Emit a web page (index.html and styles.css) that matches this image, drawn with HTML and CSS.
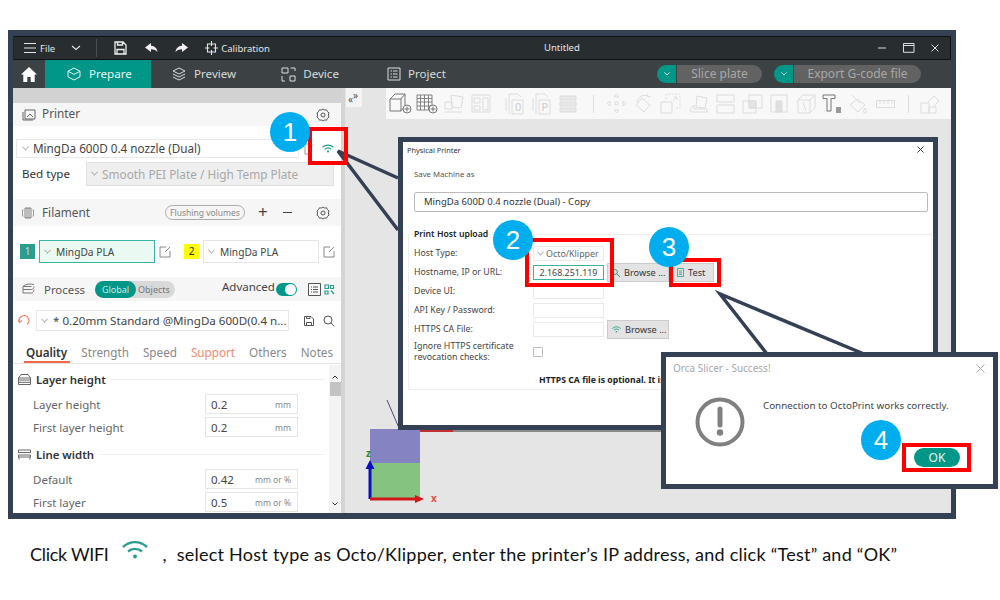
FILE: index.html
```html
<!DOCTYPE html>
<html lang="en">
<head>
    <meta charset="UTF-8">
    <title>Orca Slicer - Physical Printer setup</title>
    <link rel="stylesheet" href="styles.css">
</head>
<body>
<div class="page">
    <div class="shot">
        <div class="titlebar">
            <svg class="tb-ico menu" width="14" height="12" viewBox="0 0 14 12"><path d="M1 1.500h12M1 6h12M1 10.500h12" stroke="#e4e6e6" stroke-width="1.200"/></svg>
            <span class="tb-file">File</span>
            <svg class="tb-caret" width="10" height="6" viewBox="0 0 10 6"><path d="M1 1l4 3.500L9 1" fill="none" stroke="#e4e6e6" stroke-width="1.100"/></svg>
            <span class="tb-sep"></span>
            <svg class="tb-save" width="13" height="14" viewBox="0 0 13 14"><path d="M1 1h8l3 3v9H1zM3.500 1v3h5V1M3 13V8.500h7V13" fill="none" stroke="#f0f0f0" stroke-width="1.300"/></svg>
            <svg class="tb-undo" width="13" height="10" viewBox="0 0 13 10"><path d="M6 0L0 4.500 6 9V6.200c3 0 5 .8 6.500 3C12 5.500 10 3 6 2.800z" fill="#f0f0f0"/></svg>
            <svg class="tb-redo" width="13" height="10" viewBox="0 0 13 10"><path d="M7 0l6 4.500L7 9V6.200c-3 0-5 .8-6.500 3C1 5.500 3 3 7 2.800z" fill="#f0f0f0"/></svg>
            <svg class="tb-calib" width="13" height="14" viewBox="0 0 13 14"><path d="M2.500 3h8v8h-8zM6.500 0v5M6.500 9v5M0 7h4.500M8.500 7H13" fill="none" stroke="#e4e6e6" stroke-width="1.100"/></svg>
            <span class="tb-calib-text">Calibration</span>
            <span class="tb-title">Untitled</span>
            <span class="win-btns">
                <svg width="9" height="2" viewBox="0 0 9 2"><path d="M0 1h8" stroke="#ddd" stroke-width="1"/></svg>
                <svg width="12" height="10" viewBox="0 0 12 10"><path d="M.5.500h10.500v8.800H.5zM.5 2.500h10.500" fill="none" stroke="#ddd"/></svg>
                <svg width="8" height="8" viewBox="0 0 8 8"><path d="M.5.500l7 7M7.500.500l-7 7" stroke="#ddd"/></svg>
            </span>
        </div>

        <div class="tabbar">
            <svg class="home" width="16" height="15" viewBox="0 0 16 15"><path d="M8 0L0 7.500h2.300V15h4v-5h3.400v5h4V7.500H16z" fill="#fff"/></svg>
            <div class="tab active">
                <svg width="14" height="14" viewBox="0 0 14 14"><path d="M7 1l6 3.200v5.600L7 13 1 9.800V4.200zM1 4.200L7 7.400l6-3.200" fill="none" stroke="#e6f5f2"/></svg>
                <span>Prepare</span>
            </div>
            <div class="tab preview">
                <svg width="14" height="14" viewBox="0 0 14 14"><path d="M7 1l6 3-6 3-6-3zM1 7l6 3 6-3M1 10l6 3 6-3" fill="none" stroke="#d8dcdc"/></svg>
                <span>Preview</span>
            </div>
            <div class="tab device">
                <svg width="15" height="15" viewBox="0 0 15 15"><path d="M1 1h6v5H1zM9.500 1H14v3M1 9v5h3M9 9h5v5H9z" fill="none" stroke="#d8dcdc"/></svg>
                <span>Device</span>
            </div>
            <div class="tab project">
                <svg width="14" height="14" viewBox="0 0 14 14"><path d="M1 1h12v12H1zM3.500 4h1.500M6 4h4.500M3.500 7h1.500M6 7h4.500M3.500 10h1.500M6 10h4.500" fill="none" stroke="#d8dcdc"/></svg>
                <span>Project</span>
            </div>
            <div class="actions">
                <div class="split slice"><i><svg width="6" height="4" viewBox="0 0 6 4"><path d="M.5.500L3 3 5.500.500" fill="none" stroke="#fff"/></svg></i><b>Slice plate</b></div>
                <div class="split export"><i><svg width="6" height="4" viewBox="0 0 6 4"><path d="M.5.500L3 3 5.500.500" fill="none" stroke="#fff"/></svg></i><b>Export G-code file</b></div>
            </div>
        </div>

        <div class="workspace">
            <aside class="sidebar">
                <div class="band"></div>
                <div class="head printer-head">
                    <svg class="head-ico" width="14" height="12" viewBox="0 0 14 12"><path d="M3 1h10v9H3zM1 3v8h10M5 8l3-3 3 3" fill="none" stroke="#666"/></svg>
                    <span class="head-text">Printer</span>
                    <svg class="gear" width="14" height="14" viewBox="0 0 14 14"><path d="M7 1l1.500 1 2-.2 1 1.800 1.500 1.300L12.400 7l.6 2.100-1.500 1.300-1 1.800-2-.2L7 13l-1.500-1-2 .2-1-1.800L1 9.100 1.600 7 1 4.900l1.500-1.300 1-1.800 2 .2z" fill="none" stroke="#555"/><circle cx="7" cy="7" r="2" fill="none" stroke="#555"/></svg>
                </div>
                <div class="printer-row">
                    <div class="combo printer-combo"><em class="chev"></em>MingDa 600D 0.4 nozzle (Dual)</div>
                    <svg class="printer-edit" width="10" height="12" viewBox="0 0 10 12"><path d="M8 3V1H1v10h7" fill="none" stroke="#999"/></svg>
                    <svg class="printer-wifi" width="12" height="9" viewBox="0 0 24 18"><path d="M1 6.500c6.500-6 15.500-6 22 0M5.500 10.500c4-3.500 9-3.500 13 0" fill="none" stroke="#1fa58f" stroke-width="2.500"/><circle cx="12" cy="15" r="2.200" fill="#1fa58f"/></svg>
                </div>
                <div class="bed-row">
                    <span class="bed-label">Bed type</span>
                    <div class="combo bed-combo"><em class="chev"></em>Smooth PEI Plate / High Temp Plate</div>
                </div>
                <div class="head filament-head">
                    <svg class="head-ico" width="12" height="12" viewBox="0 0 12 12"><path d="M1 2.500c-1 2-1 5 0 7M11 2.500c1 2 1 5 0 7M3 1h6v10H3zM5 1v10M7 1v10" fill="none" stroke="#777" stroke-width=".9"/></svg>
                    <span class="head-text">Filament</span>
                    <span class="flush">Flushing volumes</span>
                    <span class="plus">+</span>
                    <span class="minus"></span>
                    <svg class="gear" width="14" height="14" viewBox="0 0 14 14"><path d="M7 1l1.500 1 2-.2 1 1.800 1.500 1.300L12.400 7l.6 2.100-1.500 1.300-1 1.800-2-.2L7 13l-1.500-1-2 .2-1-1.800L1 9.100 1.600 7 1 4.900l1.500-1.300 1-1.800 2 .2z" fill="none" stroke="#555"/><circle cx="7" cy="7" r="2" fill="none" stroke="#555"/></svg>
                </div>
                <div class="filament-row">
                    <span class="badge green">1</span>
                    <div class="combo fil-combo selected"><em class="chev"></em>MingDa PLA</div>
                    <svg class="edit" width="12" height="12" viewBox="0 0 12 12"><path d="M7 1H1v10h10V5M6 6l5-5" fill="none" stroke="#888"/></svg>
                    <span class="badge yellow">2</span>
                    <div class="combo fil-combo"><em class="chev"></em>MingDa PLA</div>
                    <svg class="edit" width="12" height="12" viewBox="0 0 12 12"><path d="M7 1H1v10h10V5M6 6l5-5" fill="none" stroke="#888"/></svg>
                </div>
                <div class="head process-head">
                    <svg class="head-ico" width="13" height="12" viewBox="0 0 13 12"><path d="M1 3.500C4 .5 9 1 12 1.500M1 3.500h8.500M1 3.500v3h8.500c1.500 0 2.500-2 2.500-3M1 6.500V10h8.500c1.500 0 2.500-2 2.500-3.500" fill="none" stroke="#777"/></svg>
                    <span class="head-text">Process</span>
                    <div class="toggle"><span class="on">Global</span><span class="off">Objects</span></div>
                    <span class="advanced">Advanced</span>
                    <span class="switch"><i></i></span>
                    <svg class="list-ico" width="13" height="13" viewBox="0 0 13 13"><path d="M.5.500h12v12H.5zM3 4h1M5 4h5M3 6.500h1M5 6.500h5M3 9h1M5 9h5" fill="none" stroke="#555"/></svg>
                    <svg class="nodes-ico" width="11" height="11" viewBox="0 0 11 11"><path d="M1 1h3.500v3.500H1zM6.500 1.500h3v3h-3zM1 7h3v3H1zM7 6.500l3 3.500" fill="none" stroke="#2a9d8c" stroke-width="1.200"/></svg>
                </div>
                <div class="preset-row">
                    <svg class="refresh" width="12" height="11" viewBox="0 0 12 11"><path d="M1.500 7A4.800 4.800 0 1 1 9 9.300" fill="none" stroke="#f47e62" stroke-width="1.100"/><path d="M0 4.500l1.500 3L4 5.500" fill="none" stroke="#f47e62" stroke-width="1.100"/></svg>
                    <div class="combo preset-combo"><em class="chev"></em>* 0.20mm Standard @MingDa 600D(0.4 n...</div>
                    <svg class="preset-save" width="10" height="10" viewBox="0 0 10 10"><path d="M.5.500h6.500l2.500 2.500v6.500h-9zM2.500 9.500V6.500h5v3M2.500.5v2h3.500v-2" fill="none" stroke="#555"/></svg>
                    <svg class="preset-search" width="12" height="12" viewBox="0 0 12 12"><circle cx="5" cy="5" r="4" fill="none" stroke="#555"/><path d="M8 8l3.500 3.500" stroke="#555"/></svg>
                </div>
                <div class="tabs">
                    <span class="cur">Quality</span>
                    <span>Strength</span>
                    <span>Speed</span>
                    <span class="warn">Support</span>
                    <span>Others</span>
                    <span>Notes</span>
                </div>
                <div class="params">
                    <div class="list">
                        <div class="sect first-sect">
                            <svg width="13" height="11" viewBox="0 0 13 11"><path d="M3 .5h7l2.500 3.500v6.500H.5V4zM.5 4h12M.5 6h12M.5 8.300h12" fill="none" stroke="#666"/></svg>
                            <b>Layer height</b><hr>
                        </div>
                        <div class="param"><label>Layer height</label><div class="field"><span>0.2</span><small>mm</small></div></div>
                        <div class="param"><label>First layer height</label><div class="field"><span>0.2</span><small>mm</small></div></div>
                        <div class="sect">
                            <svg width="13" height="11" viewBox="0 0 13 11"><path d="M.5 1h12v2.500H.5zM.5 6h12v2H.5zM1 8v2.500M12 8v2.500" fill="none" stroke="#666"/></svg>
                            <b>Line width</b><hr>
                        </div>
                        <div class="param"><label>Default</label><div class="field"><span>0.42</span><small>mm or %</small></div></div>
                        <div class="param"><label>First layer</label><div class="field"><span>0.5</span><small>mm or %</small></div></div>
                    </div>
                    <div class="scroll">
                        <svg width="6" height="4" viewBox="0 0 6 4"><path d="M.5 3.500L3 1l2.500 2.500" fill="none" stroke="#333"/></svg>
                        <i></i>
                        <svg class="down" width="6" height="4" viewBox="0 0 6 4"><path d="M.5.500L3 3 5.500.500" fill="none" stroke="#333"/></svg>
                    </div>
                </div>
            </aside>

            <main class="viewport">
                <div class="collapse">
                    <span>«</span><span class="up">»</span>
                </div>
                <div class="toolbar">
                    <svg width="23" height="21" viewBox="0 0 23 21"><path d="M1 6l5-5h10v12l-4 5H1zM1 6h11v12M12 6l4-5" fill="none" stroke="#777"/><circle cx="18" cy="16" r="4" fill="#f8f8f8" stroke="#777"/><path d="M18 13.500v5M15.500 16h5" stroke="#777"/></svg>
                    <svg class="g1" width="22" height="20" viewBox="0 0 22 20"><path d="M1 1h15v15H1zM1 4.500h15M1 8h15M1 12h15M4.500 1v15M8.500 1v15M12.500 1v15" fill="none" stroke="#777" stroke-width=".9"/><circle cx="17" cy="15" r="4" fill="#f8f8f8" stroke="#777"/><path d="M17 12.500v5M14.500 15h5" stroke="#777"/></svg>
                    <svg class="g2 dim" width="22" height="20" viewBox="0 0 22 20"><path d="M8 1l12 2-2 11-9-1zM2 8h7v7H2zM2 18h17" fill="none"/></svg>
                    <svg class="g3 dim" width="20" height="19" viewBox="0 0 20 19"><path d="M1 1h18v17H1zM3 4h6v5H3zM3 12h6v4H3zM12 4h5v12h-5z" fill="none"/></svg>
                    <svg class="g4 dim" width="22" height="22" viewBox="0 0 22 22"><path d="M5 21V1h9l3 3M2 18V5M8 7h11v14H8z" fill="none"/><text x="11" y="18" class="tool-letter">0</text></svg>
                    <svg class="g5 dim" width="20" height="22" viewBox="0 0 20 22"><path d="M4 21V1h9l3 3M1 18V5M7 7h11v14H7z" fill="none"/><text x="9.500" y="18" class="tool-letter">P</text></svg>
                    <svg class="g6 dim" width="18" height="18" viewBox="0 0 18 18"><path d="M1 1h16v4H1zM1 7h16v4H1zM1 13h16v4H1z" fill="#e8e8e8"/></svg>
                    <span class="tool-sep s1"></span>
                    <svg class="g7 dim" width="21" height="21" viewBox="0 0 21 21"><path d="M10.500 1l2.500 3h-5zM10.500 20l2.500-3h-5zM1 10.500l3-2.500v5zM20 10.500l-3-2.500v5zM9 9h3v3H9z" fill="none"/></svg>
                    <svg class="g8 dim" width="21" height="21" viewBox="0 0 21 21"><path d="M9 5l8 7-6 7-8-7zM4 9C5 4 10 1 14 3M14 1l1 3 3-1" fill="none"/></svg>
                    <svg class="g9 dim" width="21" height="21" viewBox="0 0 21 21"><path d="M1 9h11v11H1z" fill="none"/><path d="M6 6V1h14v14h-5" fill="none" stroke-dasharray="2 1.500"/><path d="M13 8l4-4M14 4h3v3" fill="none"/></svg>
                    <svg class="g10 dim" width="19" height="20" viewBox="0 0 19 20"><path d="M8 2l10 2-2 10-9-1zM1 15l4-4v4h13v3H2z" fill="none"/></svg>
                    <svg class="g11 dim" width="19" height="20" viewBox="0 0 19 20"><path d="M1 1h17v7H1zM1 11h17v8H1z" fill="none"/></svg>
                    <svg class="g12 dim" width="21" height="20" viewBox="0 0 21 20"><path d="M1 7h13v12H1zM7 1h13v13H7z" fill="none"/><path d="M7 7h7v7H7z" fill="#e4e4e4"/></svg>
                    <svg class="g13 dim" width="18" height="19" viewBox="0 0 18 19"><path d="M1 1h16v17H1z" fill="none"/><path d="M6 7h6v11H6z" fill="#e0e0e0"/></svg>
                    <svg class="g14 dim" width="19" height="20" viewBox="0 0 19 20"><path d="M1 6l5-5h12v13l-5 5H1zM1 6h12v13M13 6l5-5M6 8l3 9" fill="none"/></svg>
                    <svg class="g15" width="20" height="20" viewBox="0 0 20 20"><path d="M1 1h12v3.500H9V17H5V4.500H1z" fill="none" stroke="#777"/><path d="M14 13h5v6h-5z" fill="#999"/></svg>
                    <svg class="g16 dim" width="20" height="20" viewBox="0 0 20 20"><path d="M8 5l8 6-7 7-8-7zM3 1l8 8M16 14c-2 3-2 5 0 5s2-2 0-5z" fill="none"/></svg>
                    <svg class="g17 dim" width="19" height="8" viewBox="0 0 19 8"><path d="M.5.500h18v7H.5zM4 1v3M8 1v3M12 1v3M16 1v3" fill="none"/></svg>
                    <span class="tool-sep s2"></span>
                    <svg class="g18 dim" width="20" height="20" viewBox="0 0 20 20"><path d="M1 9h8v10H1zM9 13h7v6H9zM8 8l6-6 5 5-6 6" fill="none"/></svg>
                </div>

                <div class="ruler"></div>
                <div class="plate-top"></div>
                <div class="plate-bottom"></div>
                <svg class="axes" width="72" height="62" viewBox="0 0 72 62">
                    <path d="M5 54V22" stroke="#0a0fc0" stroke-width="3"/>
                    <path d="M.5 24L5 15l4.500 9z" fill="#0a0fc0"/>
                    <path d="M5 54h47" stroke="#d01818" stroke-width="3"/>
                    <path d="M50 50l9 4-9 4z" fill="#d01818"/>
                    <text x="1" y="12" class="axis-z">z</text>
                    <text x="66" y="57" class="axis-x">x</text>
                </svg>
            </main>
        </div>
    </div>

    <p class="caption">
        <span class="click">Click WIFI</span>
        <svg width="26" height="20" viewBox="0 0 26 20"><path d="M1 7c7-6.500 17-6.500 24 0M6 11.500c4-3.500 10-3.500 14 0" fill="none" stroke="#2a9d8c" stroke-width="2.400"/><circle cx="13" cy="16.500" r="2" fill="#2a9d8c"/></svg>
        <span class="rest">,&nbsp; select Host type as Octo/Klipper, enter the printer’s IP address, and click “Test” and “OK”</span>
    </p>

    <svg class="callout" width="1000" height="600" viewBox="0 0 1000 600">
        <path d="M398 178L338 151 398 230" fill="none" stroke="#344154" stroke-width="3.500"/>
        <path d="M387 400L399 428" fill="none" stroke="#4a4a70" stroke-width="1"/>
    </svg>

    <section class="dialog printer-dialog">
        <div class="dlg-title"><span>Physical Printer</span><svg width="7" height="7" viewBox="0 0 7 7"><path d="M.5.500l6 6M6.500.500l-6 6" stroke="#333"/></svg></div>
        <p class="save-label">Save Machine as</p>
        <div class="name-input">MingDa 600D 0.4 nozzle (Dual) - Copy</div>
        <fieldset class="host-group">
            <legend>Print Host upload</legend>
            <div class="f-row"><label>Host Type:</label><div class="f-box host-type"><em class="chev"></em>Octo/Klipper</div></div>
            <div class="f-row">
                <label>Hostname, IP or URL:</label><div class="f-box focus">2.168.251.119</div>
                <span class="btn browse"><svg width="8" height="8" viewBox="0 0 8 8"><circle cx="3" cy="3" r="2.400" fill="none" stroke="#2a9d8c"/><path d="M5 5l3 3" stroke="#2a9d8c"/></svg>Browse ...</span>
                <span class="btn test"><svg width="7" height="9" viewBox="0 0 7 9"><path d="M.5.500h6v8h-6zM2 3h3M2 4.800h3M2 6.500h3" fill="none" stroke="#2a9d8c" stroke-width=".8"/></svg>Test</span>
            </div>
            <div class="f-row"><label>Device UI:</label><div class="f-box"></div></div>
            <div class="f-row"><label>API Key / Password:</label><div class="f-box"></div></div>
            <div class="f-row">
                <label>HTTPS CA File:</label><div class="f-box"></div>
                <span class="btn browse"><svg width="9" height="7" viewBox="0 0 24 18"><path d="M1 6.500c6.500-6 15.500-6 22 0M5.500 10.500c4-3.500 9-3.500 13 0" fill="none" stroke="#2a9d8c" stroke-width="2.500"/><circle cx="12" cy="15" r="2.200" fill="#2a9d8c"/></svg>Browse ...</span>
            </div>
            <div class="f-row ignore"><label>Ignore HTTPS certificate<br>revocation checks:</label><span class="check"></span></div>
            <p class="optional">HTTPS CA file is optional. It is</p>
        </fieldset>
    </section>

    <svg class="callout" width="1000" height="600" viewBox="0 0 1000 600">
        <path d="M767 354L720 294 864 354" fill="none" stroke="#344154" stroke-width="3.500"/>
    </svg>

    <section class="dialog success-dialog">
        <div class="ok-title"><span>Orca Slicer - Success!</span><svg width="9" height="9" viewBox="0 0 9 9"><path d="M.5.500l8 8M8.500.500l-8 8" stroke="#aaa"/></svg></div>
        <div class="ok-body">
            <svg width="50" height="50" viewBox="0 0 50 50"><circle cx="25" cy="25" r="22.500" fill="none" stroke="#808080" stroke-width="4"/><path d="M25 12v16" stroke="#808080" stroke-width="5" stroke-linecap="round"/><circle cx="25" cy="35.500" r="3.200" fill="#808080"/></svg>
            <div class="ok-msg">Connection to OctoPrint works correctly.</div>
        </div>
        <span class="ok-btn">OK</span>
    </section>

    <span class="mark m1"></span>
    <span class="mark m2"></span>
    <span class="mark m3"></span>
    <span class="mark m4"></span>
    <span class="step s-1">1</span>
    <span class="step s-2">2</span>
    <span class="step s-3">3</span>
    <span class="step s-4">4</span>
</div>
</body>
</html>
```

FILE: styles.css
```css
html, body {
    margin: 0;
    padding: 0;
    background: #fff;
    font-family: "Noto Sans", sans-serif;
    color: #333;
}

.page {
    position: relative;
    width: 1000px;
    height: 600px;
    overflow: hidden;
    padding-top: 30px;
    box-sizing: border-box;
}

.shot {
    margin-left: 8px;
    width: 948px;
    height: 489px;
    box-sizing: border-box;
    border: solid #344154;
    border-width: 6px 5px;
    display: flex;
    flex-direction: column;
    background: #e5e5e5;
}

/* Title bar */
.titlebar {
    height: 24px;
    flex: none;
    display: flex;
    align-items: center;
    background: #282d2f;
    border: 1px solid #111;
    border-left-color: #222;
    box-sizing: border-box;
    color: #e4e6e6;
    font-size: 9.500px;
    position: relative;
}

.menu { margin-left: 9px; }
.tb-file { margin-left: 3px; }
.tb-caret { margin-left: 16px; }
.tb-sep { width: 1px; height: 18px; background: #4a4f51; margin-left: 15px; }
.tb-save { margin-left: 17px; }
.tb-undo { margin-left: 18px; }
.tb-redo { margin-left: 17px; }
.tb-calib { margin-left: 17px; }
.tb-calib-text { margin-left: 3px; }

.tb-title {
    position: absolute;
    left: 530px;
    top: 4px;
}

.win-btns {
    margin-left: auto;
    display: flex;
    align-items: center;
    gap: 16px;
    margin-right: 11px;
}

/* Tab bar */
.tabbar {
    height: 28px;
    flex: none;
    display: flex;
    align-items: center;
    background: #3c4244;
    color: #d8dcdc;
    font-size: 11.600px;
}

.home { margin: 0 8px 0 8px; }

.tab {
    display: flex;
    align-items: center;
    gap: 8px;
    height: 100%;
}

.tab span { padding-bottom: 2px; }

.tab.active {
    background: #009688;
    color: #e6f5f2;
    width: 106px;
    box-sizing: border-box;
    padding-left: 22px;
}

.preview { margin-left: 21px; }
.device { margin-left: 45px; gap: 7px; }
.project { margin-left: 48px; gap: 7px; }

.actions {
    margin-left: auto;
    margin-right: 30px;
    display: flex;
    gap: 12px;
}

.split {
    display: flex;
    height: 18px;
    font-size: 12px;
}

.split i {
    width: 19px;
    background: #009688;
    border-radius: 9px 0 0 9px;
    display: flex;
    align-items: center;
    justify-content: center;
    margin-right: 1px;
}

.split b {
    font-weight: normal;
    background: #626262;
    color: #a8a8a8;
    border-radius: 0 9px 9px 0;
    text-align: center;
    line-height: 18px;
}

.slice b { width: 85px; }
.export b { width: 127px; }

/* Left panel */
.workspace {
    flex: 1;
    display: flex;
    min-height: 0;
}

.sidebar {
    width: 328px;
    flex: none;
    background: #fff;
    display: flex;
    flex-direction: column;
    border-right: 4px solid #d4d4d4;
    box-sizing: content-box;
    font-size: 11.800px;
}

.band {
    height: 15px;
    background: #d2d2d2;
    flex: none;
}

.head {
    display: flex;
    align-items: center;
    background: #f6f6f6;
    flex: none;
    position: relative;
}

.printer-head { height: 23px; }
.filament-head { height: 27px; margin-top: 13px; }
.process-head { height: 24px; margin-top: 14px; }

.head-ico { margin-left: 9px; }
.head-text { margin-left: 6px; color: #555; padding-bottom: 3px; }
.filament-head .head-text { margin-left: 8px; padding-bottom: 2px; }
.process-head .head-text { margin-left: 9px; padding: 0; font-size: 11.400px; }
.gear { margin-left: auto; margin-right: 11px; }

.printer-row {
    display: flex;
    align-items: center;
    height: 19px;
    margin-top: 13px;
    padding-left: 3px;
    flex: none;
}

.combo {
    display: flex;
    align-items: center;
    box-sizing: border-box;
    border: 1px solid #e8e8e8;
    background: #fff;
    white-space: nowrap;
    overflow: hidden;
}

.chev {
    width: 4px;
    height: 4px;
    border: solid #aaa;
    border-width: 0 1px 1px 0;
    transform: rotate(45deg) translate(-1px, -1px);
    margin: 0 5px 0 5px;
    flex: none;
}

.printer-combo { width: 283px; height: 19px; font-size: 11.700px; padding: 0 0 1px 1px; color: #444; }
.printer-edit { margin-left: 5px; }
.printer-wifi { margin-left: 8px; }

.bed-row {
    display: flex;
    align-items: center;
    height: 24px;
    margin-top: 4px;
    flex: none;
}

.bed-label { margin-left: 9px; width: 64px; color: #333; font-size: 11.600px; padding-bottom: 1px; }

.bed-combo {
    width: 248px;
    height: 24px;
    background: #efefef;
    border-color: #e0e0e0;
    color: #a8a8a8;
    font-size: 11.800px;
    padding-bottom: 1px;
}

.flush {
    position: absolute;
    left: 152px;
    top: 6px;
    width: 80px;
    height: 15px;
    box-sizing: border-box;
    border: 1px solid #aaa;
    border-radius: 8px;
    font-size: 8.500px;
    line-height: 13px;
    text-align: center;
    color: #888;
}

.plus {
    position: absolute;
    left: 245px;
    top: 2px;
    font-size: 17px;
    line-height: 22px;
    color: #444;
}

.minus {
    position: absolute;
    left: 270px;
    top: 13px;
    width: 9px;
    height: 1px;
    background: #444;
}

.filament-row {
    display: flex;
    align-items: center;
    height: 23px;
    margin-top: 14px;
    flex: none;
    font-size: 10.200px;
}

.badge {
    width: 15px;
    height: 15px;
    line-height: 15px;
    text-align: center;
    font-size: 10px;
    flex: none;
}

.badge.green { background: #2a9d8c; color: #cde; margin-left: 7px; }
.badge.yellow { background: #ff0; color: #222; margin-left: 13px; }

.fil-combo {
    width: 116px;
    height: 23px;
    margin-left: 4px;
    color: #444;
    border-color: #e4e4e4;
}

.fil-combo .chev { margin-right: 6px; }
.fil-combo.selected { background: #eafaf3; border-color: #3bb3a2; }
.edit { margin-left: 4px; flex: none; }

.toggle {
    position: absolute;
    left: 82px;
    top: 4px;
    width: 80px;
    height: 17px;
    border-radius: 9px;
    background: #d9d9d9;
    display: flex;
    align-items: center;
    font-size: 9px;
}

.toggle .on {
    background: #009688;
    color: #cfe9e4;
    width: 41px;
    height: 17px;
    line-height: 17px;
    text-align: center;
    border-radius: 9px;
}

.toggle .off { color: #777; margin-left: 2px; }

.advanced {
    position: absolute;
    left: 209px;
    top: 2px;
    color: #444;
    font-size: 11.500px;
}

.switch {
    position: absolute;
    left: 263px;
    top: 6px;
    width: 21px;
    height: 13px;
    border-radius: 7px;
    background: #009688;
}

.switch i {
    position: absolute;
    right: 1px;
    top: 1px;
    width: 11px;
    height: 11px;
    background: #fff;
    border-radius: 50%;
}

.list-ico { position: absolute; left: 295px; top: 6px; }
.nodes-ico { position: absolute; left: 311px; top: 7px; }

.preset-row {
    display: flex;
    align-items: center;
    height: 21px;
    margin-top: 9px;
    flex: none;
}

.refresh { margin-left: 5px; }

.preset-combo {
    width: 253px;
    height: 21px;
    margin-left: 6px;
    font-size: 11.600px;
    color: #444;
}

.preset-combo .chev { margin-right: 6px; }
.preset-save { margin-left: 15px; }
.preset-search { margin-left: 9px; }

.tabs {
    display: flex;
    height: 24px;
    margin-top: 9px;
    flex: none;
    box-sizing: border-box;
    border-bottom: 1px solid #e6e6e6;
    font-size: 11.700px;
    color: #888;
    padding: 2px 0 0 13px;
    gap: 14px;
    line-height: 20px;
}

.tabs span { position: relative; }
.tabs .cur { color: #333; font-weight: 600; }
.tabs .warn { color: #f58a6e; }

.tabs .cur::after {
    content: "";
    position: absolute;
    left: -2px;
    right: -3px;
    bottom: 0;
    height: 2px;
    background: #f0684a;
}

.params {
    flex: 1;
    display: flex;
    min-height: 0;
}

.list {
    flex: 1;
    min-width: 0;
    padding: 0 0 0 5px;
}

.sect {
    display: flex;
    align-items: center;
    height: 18px;
    margin-top: 8px;
    font-size: 11.400px;
    color: #333;
}

.first-sect { margin-top: 6px; }
.sect b { margin-left: 5px; font-weight: 600; }

.sect hr {
    flex: 1;
    height: 1px;
    margin: 0 4px 0 5px;
    border: 0;
    background: #eee;
}

.param {
    display: flex;
    align-items: center;
    height: 20px;
    margin-top: 3px;
    color: #666;
    font-size: 11.500px;
}

.sect + .param { margin-top: 6px; }
.param label { width: 187px; padding-left: 15px; box-sizing: border-box; }

.field {
    width: 93px;
    height: 20px;
    box-sizing: border-box;
    border: 1px solid #e4e4e4;
    display: flex;
    align-items: center;
    justify-content: space-between;
    padding: 0 6px 0 5px;
    color: #444;
    font-size: 11.500px;
}

.field small { font-size: 8.500px; color: #888; }

.scroll {
    width: 12px;
    flex: none;
    margin-top: 1px;
    display: flex;
    flex-direction: column;
    align-items: center;
    background: #f4f4f4;
    padding: 10px 0 7px;
    box-sizing: border-box;
}

.scroll i {
    width: 11px;
    height: 14px;
    background: #c4c4c4;
    margin-top: 3px;
}

.scroll .down { margin-top: auto; }

/* Scene */
.viewport {
    flex: 1;
    position: relative;
    background: #e5e5e5;
    min-width: 0;
}

.collapse {
    position: absolute;
    left: 1px;
    top: 0;
    width: 16px;
    height: 19px;
    background: #f4f4f4;
    font-size: 10px;
    line-height: 10px;
    color: #555;
}

.collapse span { position: absolute; left: 2px; top: 6px; }
.collapse .up { left: 7px; top: 2px; }

.toolbar {
    position: absolute;
    left: 41px;
    right: 0;
    top: 0;
    height: 31px;
    background: #f8f8f8;
    display: flex;
    align-items: center;
    padding-left: 3px;
}

.dim { stroke: #dcdcdc; }
.tool-letter { font-size: 11px; fill: #ccc; stroke: none; font-family: "Noto Sans", sans-serif; }

.g1 { margin-left: 4px; }
.g2 { margin-left: 5px; }
.g3 { margin-left: 6px; }
.g4 { margin-left: 13px; }
.g5 { margin-left: 6px; }
.g6 { margin-left: 7px; }
.tool-sep { width: 1px; height: 18px; background: #ddd; }
.s1 { margin-left: 16px; }
.g7 { margin-left: 12px; }
.g8 { margin-left: 6px; }
.g9 { margin-left: 6px; }
.g10 { margin-left: 8px; }
.g11 { margin-left: 8px; }
.g12 { margin-left: 7px; }
.g13 { margin-left: 7px; }
.g14 { margin-left: 9px; }
.g15 { margin-left: 6px; }
.g16 { margin-left: 7px; }
.g17 { margin-left: 7px; }
.s2 { margin-left: 13px; }
.g18 { margin-left: 11px; }

.ruler {
    position: absolute;
    left: 75px;
    top: 342px;
    width: 245px;
    height: 2px;
    background: linear-gradient(90deg, #c03030 33px, #8a8a8a 33px);
}

.plate-top {
    position: absolute;
    left: 25px;
    top: 341px;
    width: 50px;
    height: 34px;
    background: #8583c2;
}

.plate-bottom {
    position: absolute;
    left: 25px;
    top: 375px;
    width: 50px;
    height: 35px;
    background: #85c480;
}

.axes {
    position: absolute;
    left: 20px;
    top: 357px;
}

.axis-z { font-size: 10px; font-weight: bold; fill: #2a8a3a; font-family: "Noto Sans", sans-serif; }
.axis-x { font-size: 10px; font-weight: bold; fill: #d85050; font-family: "Noto Sans", sans-serif; }

/* Caption */
.caption {
    margin: 23px 0 0 30px;
    display: flex;
    align-items: center;
    height: 24px;
    font-family: "Lato", sans-serif;
    font-size: 18px;
    color: #111;
    white-space: nowrap;
}

.caption svg {
    margin: -9px 0 0 13px;
    flex: none;
}

.click { letter-spacing: -.3px; }
.rest { margin-left: 15px; letter-spacing: .25px; }

/* Overlays */
.callout {
    position: absolute;
    left: 0;
    top: 0;
}

.dialog {
    position: absolute;
    box-sizing: border-box;
    border: 5px solid #344154;
    background: #fff;
}

.printer-dialog {
    left: 398px;
    top: 137px;
    width: 540px;
    height: 293px;
    padding: 0 5px;
    font-size: 9.500px;
    color: #444;
}

.dlg-title {
    display: flex;
    justify-content: space-between;
    align-items: center;
    height: 15px;
    font-size: 7.400px;
    color: #333;
    padding-right: 4px;
    margin-left: -1px;
}

.save-label {
    margin: 10px 0 0 6px;
    font-size: 7.800px;
    line-height: 15px;
    color: #555;
}

.name-input {
    margin: 10px 0 0 6px;
    width: 514px;
    height: 20px;
    box-sizing: border-box;
    border: 1px solid #bbb;
    border-radius: 2px;
    padding-left: 9px;
    line-height: 18px;
    font-size: 9.500px;
    color: #333;
}

.host-group {
    margin: 16px 0 0 0;
    padding: 0 0 0 5px;
    border: 1px solid #eee;
    height: 162px;
    box-sizing: border-box;
    width: 524px;
    min-width: 0;
}

.host-group legend {
    font-size: 8.700px;
    font-weight: 600;
    color: #222;
    padding: 0;
    line-height: 13px;
}

.f-row {
    display: flex;
    align-items: center;
    height: 15px;
    margin-top: 4px;
}

.f-row:nth-of-type(1) { margin-top: 5px; }
.f-row label { width: 119px; flex: none; color: #444; font-size: 8.800px; line-height: 11px; }

.f-box {
    width: 71px;
    height: 15px;
    flex: none;
    box-sizing: border-box;
    border: 1px solid #eaeaea;
    display: flex;
    align-items: center;
    justify-content: center;
    font-size: 8.900px;
    white-space: nowrap;
}

.f-box.focus { border-color: #3bb3a2; }
.host-type { color: #666; justify-content: flex-start; }
.host-type .chev { margin: 0 3px 0 4px; }

.btn {
    display: flex;
    align-items: center;
    height: 19px;
    flex: none;
    box-sizing: border-box;
    border: 1px solid #ccc;
    background: #e3e3e3;
    color: #333;
    font-size: 9.200px;
    white-space: nowrap;
}

.browse { width: 62px; margin-left: 3px; padding-left: 4px; gap: 4px; }
.test { width: 43px; margin-left: 2px; padding-left: 5px; gap: 4px; }

.ignore { height: 23px; margin-top: 3px; }

.check {
    width: 10px;
    height: 10px;
    border: 1px solid #bbb;
    border-radius: 1px;
    box-sizing: border-box;
}

.optional {
    margin: 11px 0 0 125px;
    font-size: 8.700px;
    font-weight: 700;
    color: #222;
    line-height: 13px;
    white-space: nowrap;
}

.success-dialog {
    left: 661px;
    top: 352px;
    width: 337px;
    height: 137px;
}

.ok-title {
    display: flex;
    justify-content: space-between;
    align-items: center;
    height: 22px;
    padding: 0 8px 0 7px;
    font-size: 10px;
    color: #a8a8a8;
}

.ok-body {
    display: flex;
    align-items: flex-start;
    margin-top: 18px;
    padding-left: 29px;
}

.ok-msg {
    margin: 2px 0 0 18px;
    font-size: 9.800px;
    line-height: 14px;
    color: #444;
}

.ok-btn {
    position: absolute;
    left: 248px;
    top: 91px;
    width: 46px;
    height: 19px;
    border-radius: 10px;
    background: #009688;
    color: #e8f6f3;
    text-align: center;
    font-size: 12px;
    line-height: 19px;
}

.mark {
    position: absolute;
    box-sizing: border-box;
    border: 4px solid #f00;
}

.m1 { left: 308px; top: 127px; width: 40px; height: 38px; }
.m2 { left: 525px; top: 238px; width: 89px; height: 49px; }
.m3 { left: 669px; top: 258px; width: 52px; height: 29px; }
.m4 { left: 902px; top: 443px; width: 69px; height: 29px; }

.step {
    position: absolute;
    width: 40px;
    height: 40px;
    border-radius: 50%;
    background: #00aeef;
    color: #fff;
    text-align: center;
    font-family: "Liberation Sans", sans-serif;
    font-size: 26px;
    line-height: 40px;
}

.s-1 { left: 270px; top: 112px; }
.s-2 { left: 493px; top: 220px; }
.s-3 { left: 649px; top: 227px; }
.s-4 { left: 861px; top: 420px; }
```
